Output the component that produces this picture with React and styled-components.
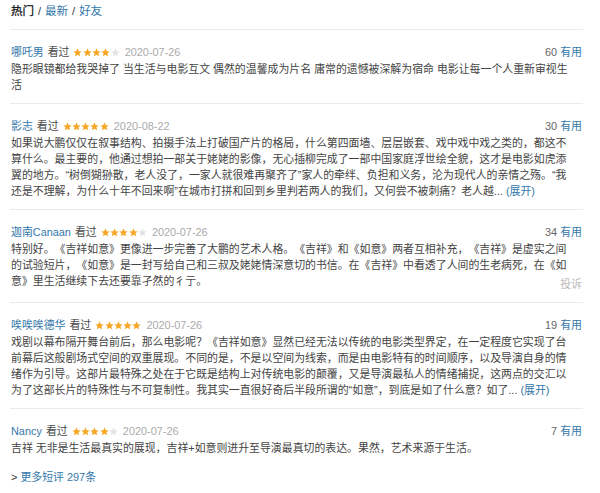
import React from "react";
import styled, { createGlobalStyle } from "styled-components";

const Global = createGlobalStyle`
  html, body { margin: 0; padding: 0; background: #fff; }
  body {
    font-family: "Liberation Sans", "Noto Sans CJK SC", sans-serif;
    color: #494949;
    text-spacing-trim: space-all;
  }
`;

const reviews = [
  {
    name: "哪吒男",
    rating: 4,
    date: "2020-07-26",
    votes: 60,
    lines: [
      "隐形眼镜都给我哭掉了 当生活与电影互文 偶然的温馨成为片名 庸常的遗憾被深解为宿命 电影让每一个人重新审视生",
      "活",
    ],
  },
  {
    name: "影志",
    rating: 5,
    date: "2020-08-22",
    votes: 30,
    more: true,
    lines: [
      "如果说大鹏仅仅在叙事结构、拍摄手法上打破国产片的格局，什么第四面墙、层层嵌套、戏中戏中戏之类的，都这不",
      "算什么。最主要的，他通过想拍一部关于姥姥的影像，无心插柳完成了一部中国家庭浮世绘全貌，这才是电影如虎添",
      "翼的地方。“树倒猢狲散，老人没了，一家人就很难再聚齐了”家人的牵绊、负担和义务，沦为现代人的亲情之殇。“我",
      "还是不理解，为什么十年不回来啊”在城市打拼和回到乡里判若两人的我们，又何尝不被刺痛？老人越...",
    ],
  },
  {
    name: "迦南Canaan",
    rating: 4,
    date: "2020-07-26",
    votes: 34,
    report: true,
    lines: [
      "特别好。《吉祥如意》更像进一步完善了大鹏的艺术人格。《吉祥》和《如意》两者互相补充，《吉祥》是虚实之间",
      "的试验短片，《如意》是一封写给自己和三叔及姥姥情深意切的书信。在《吉祥》中看透了人间的生老病死，在《如",
      "意》里生活继续下去还要靠孑然的彳亍。",
    ],
  },
  {
    name: "唉唉唉德华",
    rating: 5,
    date: "2020-07-26",
    votes: 19,
    more: true,
    lines: [
      "戏剧以幕布隔开舞台前后，那么电影呢？《吉祥如意》显然已经无法以传统的电影类型界定，在一定程度它实现了台",
      "前幕后这般剧场式空间的双重展现。不同的是，不是以空间为线索，而是由电影特有的时间顺序，以及导演自身的情",
      "绪作为引导。这部片最特殊之处在于它既是结构上对传统电影的颠覆，又是导演最私人的情绪捕捉，这两点的交汇以",
      "为了这部长片的特殊性与不可复制性。我其实一直很好奇后半段所谓的“如意”，到底是如了什么意？如了...",
    ],
  },
  {
    name: "Nancy",
    rating: 4,
    date: "2020-07-26",
    votes: 7,
    lines: [
      "吉祥 无非是生活最真实的展现，吉祥+如意则进升至导演最真切的表达。果然，艺术来源于生活。",
    ],
  },
];

const Star = ({ on }) => (
  <StarSvg viewBox="0 0 10 10" $on={on}>
    <path d="M5 0.4 L6.35 3.5 L9.7 3.75 L7.15 5.95 L7.95 9.3 L5 7.5 L2.05 9.3 L2.85 5.95 L0.3 3.75 L3.65 3.5 Z" />
  </StarSvg>
);

const Stars = ({ value }) => (
  <StarRow>
    {[1, 2, 3, 4, 5].map((i) => (
      <Star key={i} on={i <= value} />
    ))}
  </StarRow>
);

export default function App() {
  return (
    <Wrap>
      <Global />
      <Tabs>
        <Current>热门</Current>
        <Slash>/</Slash>
        <TabLink>最新</TabLink>
        <Slash>/</Slash>
        <TabLink>好友</TabLink>
      </Tabs>
      <List>
        {reviews.map((r, idx) => (
          <Item key={r.name} $last={idx === reviews.length - 1}>
            <Meta>
              <Info>
                <Name>{r.name}</Name>
                <Watched>看过</Watched>
                <Stars value={r.rating} />
                <Date>{r.date}</Date>
              </Info>
              <Votes>
                {r.votes} <Blue>有用</Blue>
              </Votes>
            </Meta>
            <Body>
              {r.lines.map((line, i) => (
                <Line key={i}>
                  {line}
                  {r.more && i === r.lines.length - 1 && <Blue> (展开)</Blue>}
                  {r.report && i === r.lines.length - 1 && <Report>投诉</Report>}
                </Line>
              ))}
            </Body>
          </Item>
        ))}
      </List>
      <More>
        <Arrow>&gt;</Arrow> <Blue>更多短评 297条</Blue>
      </More>
    </Wrap>
  );
}

const Wrap = styled.div`
  width: 573px;
  margin-left: 10px;
  padding-top: 2px;
  font-size: 10.9px;
`;

const Tabs = styled.div`
  display: flex;
  align-items: center;
  gap: 4px;
  padding: 0 1px 9px;
  line-height: 18px;
  font-size: 11.5px;
  border-bottom: 1px solid #ebebeb;
`;

const Current = styled.span`
  color: #111;
  -webkit-text-stroke: 0.25px #111;
`;

const Slash = styled.span`
  color: #333;
  font-size: 11px;
`;

const TabLink = styled.span`
  color: #37a;
`;

const List = styled.div`
  display: flex;
  flex-direction: column;
`;

const Item = styled.div`
  padding: 13px 0 10px 1px;
  border-bottom: ${(p) => (p.$last ? "none" : "1px solid #ebebeb")};
`;

const Meta = styled.div`
  display: flex;
  justify-content: space-between;
  align-items: center;
  line-height: 18px;
`;

const Info = styled.div`
  display: flex;
  align-items: center;
  gap: 4px;
`;

const Name = styled.span`
  color: #37a;
`;

const Watched = styled.span`
  color: #494949;
`;

const StarRow = styled.span`
  display: inline-flex;
  gap: 0.3px;
`;

const StarSvg = styled.svg`
  width: 9px;
  height: 9px;
  fill: ${(p) => (p.$on ? "#f6a623" : "#e3e3e3")};
`;

const Date = styled.span`
  color: #aaa;
  margin-left: 1px;
`;

const Votes = styled.span`
  color: #666;
  padding-right: 1px;
`;

const Blue = styled.span`
  color: #37a;
`;

const Body = styled.div`
  line-height: 16px;
  color: #444;
`;

const Line = styled.div`
  white-space: nowrap;
`;

const Report = styled.span`
  float: right;
  color: #bbb;
  margin-top: 3px;
  padding-right: 1px;
`;

const More = styled.div`
  padding: 2px 1px 0;
  line-height: 18px;
`;

const Arrow = styled.span`
  color: #333;
`;
